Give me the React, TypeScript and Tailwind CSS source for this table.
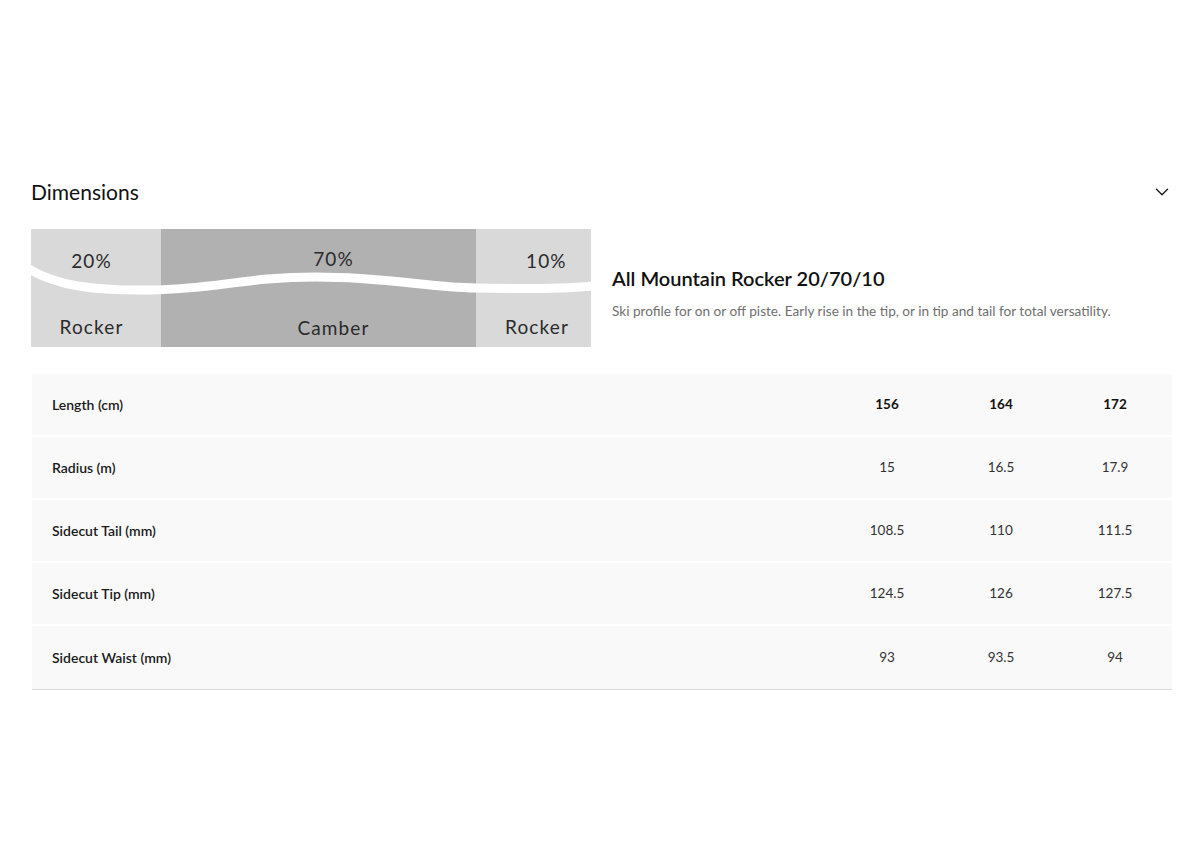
import { ChevronDown } from 'lucide-react';

const sizes = ['156', '164', '172'];

const rows = [
  { label: 'Radius (m)', values: ['15', '16.5', '17.9'] },
  { label: 'Sidecut Tail (mm)', values: ['108.5', '110', '111.5'] },
  { label: 'Sidecut Tip (mm)', values: ['124.5', '126', '127.5'] },
  { label: 'Sidecut Waist (mm)', values: ['93', '93.5', '94'] },
];

function ProfileDiagram() {
  return (
    <div className="relative flex w-[560px] h-[118px] shrink-0 text-[19px] tracking-[0.06em] text-[#2b2b2b]">
      <div className="flex w-[130px] flex-col items-center justify-between bg-[#d9d9d9] pt-[18px] pb-[6px] pr-[9px]">
        <span>20%</span>
        <span>Rocker</span>
      </div>
      <div className="flex w-[315px] flex-col items-center justify-between bg-[#b1b1b1] pt-[16px] pb-[5px] pl-[30px]">
        <span>70%</span>
        <span>Camber</span>
      </div>
      <div className="flex flex-1 flex-col justify-between bg-[#d9d9d9] pt-[18px] pb-[6px]">
        <span className="pl-[50px]">10%</span>
        <span className="pl-[29px]">Rocker</span>
      </div>
      {/* white wave line over the blocks */}
      <svg className="absolute inset-0" width="560" height="118" viewBox="0 0 560 118">
        <path
          d="M-2,40 C25,56 60,62 120,61 C185,60 215,48 285,48 C355,48 395,58 445,59 C490,60 530,60 562,57"
          fill="none"
          stroke="#ffffff"
          strokeWidth="9"
        />
      </svg>
    </div>
  );
}

export default function App() {
  return (
    <div className="min-h-[858px] w-[1200px] bg-white font-['Lato',sans-serif] text-[#1a1a1a]">
      <div className="pl-[31px] pr-[28px] pt-[179px]">
        {/* header */}
        <div className="flex items-center justify-between">
          <h2 className="text-[21px] leading-[26px] text-[#111]">Dimensions</h2>
          <ChevronDown className="-mr-[1px] h-[22px] w-[22px] text-[#222]" strokeWidth={1.6} />
        </div>

        {/* profile */}
        <div className="mt-[24px] flex items-center gap-[21px]">
          <ProfileDiagram />
          <div className="pt-[10px]">
            <div className="text-[20px] font-semibold leading-[24px] text-[#111]">All Mountain Rocker 20/70/10</div>
            <p className="mt-[12px] text-[13.6px] leading-[18px] text-[#6f6f6f]">
              Ski profile for on or off piste. Early rise in the tip, or in tip and tail for total versatility.
            </p>
          </div>
        </div>

        {/* table */}
        <div className="mt-[27px] ml-[1px] border-b border-[#dcdcdc] text-[13.5px]">
          <div className="grid h-[63px] grid-cols-[1fr_114px_114px_114px] items-center border-b-2 border-white bg-[#f9f9f9]">
            <span className="pl-[20px] text-[14px] font-semibold text-[#1a1a1a]">Length (cm)</span>
            {sizes.map((s) => (
              <span key={s} className="text-center font-bold text-[#111]">
                {s}
              </span>
            ))}
          </div>
          {rows.map((r, i) => (
            <div
              key={r.label}
              className={`grid h-[63px] grid-cols-[1fr_114px_114px_114px] items-center bg-[#f9f9f9] ${
                i < rows.length - 1 ? 'border-b-2 border-white' : ''
              }`}
            >
              <span className="pl-[20px] text-[14px] font-semibold text-[#1a1a1a]">{r.label}</span>
              {r.values.map((v, j) => (
                <span key={j} className="text-center text-[#333]">
                  {v}
                </span>
              ))}
            </div>
          ))}
        </div>
      </div>
    </div>
  );
}
